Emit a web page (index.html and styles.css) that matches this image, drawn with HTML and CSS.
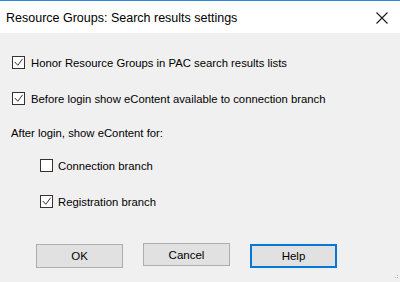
FILE: index.html
```html
<!DOCTYPE html>
<html lang="en">

<head>
    <meta charset="UTF-8">
    <meta name="viewport" content="width=device-width, initial-scale=1.0">
    <title>Resource Groups: Search results settings</title>
    <link rel="stylesheet" href="styles.css">
</head>

<body>
    <div class="window">
        <header class="titlebar">
            <span class="title">Resource Groups: Search results settings</span>
            <svg class="close" width="12" height="12" viewBox="0 0 12 12">
                <path d="M0.5 0.5 L11.5 11.5 M11.5 0.5 L0.5 11.5" stroke="#1a1a1a" stroke-width="1.1" fill="none" />
            </svg>
        </header>

        <div class="content">
            <label class="option first">
                <span class="box checked">
                    <svg width="11" height="11" viewBox="0 0 11 11">
                        <polyline points="1.8,5 4.8,8.3 9.6,1.8" stroke="#333" stroke-width="1" fill="none" />
                    </svg>
                </span>
                Honor Resource Groups in PAC search results lists
            </label>

            <label class="option">
                <span class="box checked">
                    <svg width="11" height="11" viewBox="0 0 11 11">
                        <polyline points="1.8,5 4.8,8.3 9.6,1.8" stroke="#333" stroke-width="1" fill="none" />
                    </svg>
                </span>
                Before login show eContent available to connection branch
            </label>

            <div class="caption">After login, show eContent for:</div>

            <div class="sub-options">
                <label class="option sub first">
                    <span class="box"></span>
                    Connection branch
                </label>

                <label class="option sub">
                    <span class="box checked">
                        <svg width="11" height="11" viewBox="0 0 11 11">
                            <polyline points="1.8,5 4.8,8.3 9.6,1.8" stroke="#333" stroke-width="1" fill="none" />
                        </svg>
                    </span>
                    Registration branch
                </label>
            </div>

            <div class="buttons">
                <button class="btn">OK</button>
                <button class="btn cancel">Cancel</button>
                <button class="btn default">Help</button>
            </div>
        </div>

        <svg class="grip" width="6" height="6" viewBox="0 0 6 6">
            <rect x="4" y="0" width="1" height="1" fill="#b8b8b8" />
            <rect x="4" y="2" width="1" height="1" fill="#b8b8b8" />
            <rect x="2" y="2" width="1" height="1" fill="#b8b8b8" />
        </svg>
    </div>
</body>

</html>
```

FILE: styles.css
```css
body {
    margin: 0;
    padding: 0;
    background-color: #f0f0f0;
    font-family: "Liberation Sans", Arial, sans-serif;
    font-size: 11.3px;
    color: #000;
}

.window {
    position: relative;
    height: 281px;
    border-top: 1px solid #2b88d8;
    overflow: hidden;
}

.titlebar {
    height: 32px;
    background-color: #fff;
    display: flex;
    align-items: center;
    justify-content: space-between;
    padding: 0 12px 0 6px;
}

.title {
    font-size: 12.5px;
    margin-top: 1px;
}

.close {
    margin-top: 1px;
}

.content {
    padding: 23px 0 0 12px;
}

.option {
    display: flex;
    align-items: center;
    height: 13px;
    margin-top: 23px;
    white-space: nowrap;
}

.option.first {
    margin-top: 0;
}

.box {
    width: 11px;
    height: 11px;
    border: 1px solid #333;
    background-color: #fff;
    margin-right: 6px;
    display: flex;
    flex-shrink: 0;
}

.caption {
    height: 13px;
    line-height: 13px;
    margin-top: 22px;
    margin-left: -1px;
}

.sub-options {
    margin-top: 19px;
    padding-left: 28px;
}

.option.sub .box {
    margin-right: 5px;
}

.buttons {
    display: flex;
    align-items: flex-start;
    gap: 20px;
    margin-top: 36px;
    padding-left: 24px;
}

.btn {
    width: 87px;
    height: 24px;
    background-color: #e1e1e1;
    border: 1px solid #adadad;
    font-family: "Liberation Sans", Arial, sans-serif;
    font-size: 11.5px;
    color: #000;
    padding: 0;
    margin: 0;
}

.btn.cancel {
    margin-top: -1px;
    height: 23px;
}

.btn.default {
    border: 2px solid #0078d7;
}

.grip {
    position: absolute;
    right: 1px;
    bottom: 1px;
}
```
